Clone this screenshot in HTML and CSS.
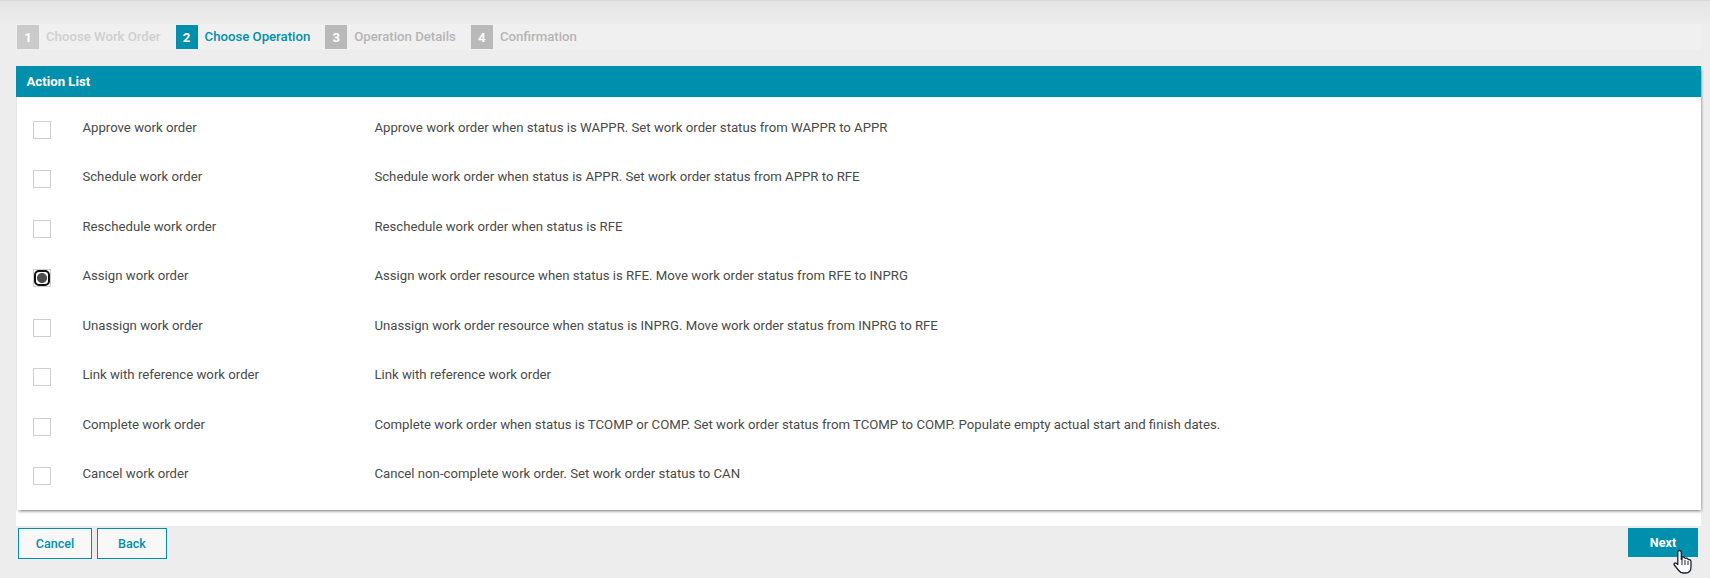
FILE: index.html
```html
<!DOCTYPE html>
<html lang="en">
<head>
<meta charset="utf-8">
<title>Action List</title>
<link rel="stylesheet" href="styles.css">
</head>
<body>
<div class="page">
  <main class="panel">
    <ol class="steps">
      <li class="step step-first"><span class="num">1</span><span class="label">Choose Work Order</span></li>
      <li class="step step-active"><span class="num">2</span><span class="label">Choose Operation</span></li>
      <li class="step"><span class="num">3</span><span class="label">Operation Details</span></li>
      <li class="step"><span class="num">4</span><span class="label">Confirmation</span></li>
    </ol>
    <section class="card">
      <h2 class="card-title">Action List</h2>
      <div class="rows">
        <div class="row"><span class="check"></span><span class="name">Approve work order</span><span class="desc">Approve work order when status is WAPPR. Set work order status from WAPPR to APPR</span></div>
        <div class="row"><span class="check"></span><span class="name">Schedule work order</span><span class="desc">Schedule work order when status is APPR. Set work order status from APPR to RFE</span></div>
        <div class="row"><span class="check"></span><span class="name">Reschedule work order</span><span class="desc">Reschedule work order when status is RFE</span></div>
        <div class="row"><span class="check check-on"><i class="dot"></i></span><span class="name">Assign work order</span><span class="desc">Assign work order resource when status is RFE. Move work order status from RFE to INPRG</span></div>
        <div class="row"><span class="check"></span><span class="name">Unassign work order</span><span class="desc">Unassign work order resource when status is INPRG. Move work order status from INPRG to RFE</span></div>
        <div class="row"><span class="check"></span><span class="name">Link with reference work order</span><span class="desc">Link with reference work order</span></div>
        <div class="row"><span class="check"></span><span class="name">Complete work order</span><span class="desc">Complete work order when status is TCOMP or COMP. Set work order status from TCOMP to COMP. Populate empty actual start and finish dates.</span></div>
        <div class="row"><span class="check"></span><span class="name">Cancel work order</span><span class="desc">Cancel non-complete work order. Set work order status to CAN</span></div>
      </div>
    </section>
    <div class="under"></div>
  </main>
  <footer class="actions">
    <button class="btn btn-cancel">Cancel</button>
    <button class="btn btn-back">Back</button>
    <button class="btn btn-next">Next</button>
  </footer>
</div>
<svg class="cursor" width="20" height="26" viewBox="0 0 20 26">
  <path d="M6.5 1.5c1.2 0 1.8.8 1.8 2v7l.7-.2V8.2c1.6-.7 2.6 0 2.8 1l.6.1c1.6-.6 2.6.2 2.8 1.2l.5.1c1.5-.3 2.3.6 2.3 2v5.2c0 3.6-2 6.2-5.6 6.2h-2.2c-2.4 0-3.6-1.2-4.9-3L1.3 16c-.8-1.3.5-2.7 2-1.8l1.5 1.3V3.5c0-1.2.6-2 1.7-2z" fill="#fff" stroke="#1c2233" stroke-width="1.3" stroke-linejoin="round"/>
  <path d="M9 11v5M12 11v5M15 12v4" stroke="#1c2233" stroke-width="1" fill="none"/>
</svg>
</body>
</html>
```
FILE: styles.css
```css
* { box-sizing: border-box; }
html, body { margin: 0; height: 100%; }
body {
  position: relative;
  overflow: hidden;
  background: #ededed;
  font-family: Roboto, "Liberation Sans", sans-serif;
  font-size: 13.2px;
  color: #4a4a4a;
}
.page {
  height: 578px;
  padding: 24px 9px 0 16px;
  border-top: 1px solid #d8d8d8;
  background: linear-gradient(#e4e4e4 0, #ededed 24px);
  display: flex;
  flex-direction: column;
}
.panel { margin-top: -1px; }
.steps {
  list-style: none;
  margin: 0;
  padding: 0 0 0 1px;
  height: 26px;
  background: #f0f0f0;
  display: flex;
  gap: 15px;
}
.step {
  display: flex;
  align-items: stretch;
  font-weight: 500;
  color: #b5b5b5;
  height: 24px;
  margin-top: 1px;
}
.num {
  width: 22px;
  background: #b9b9b9;
  color: #fff;
  font-weight: 700;
  display: flex;
  align-items: center;
  justify-content: center;
  margin-right: 7px;
}
.label { line-height: 24px; }
.step-first .num { background: #cacaca; }
.step-first .label { color: #cfcfcf; }
.step-active .num { background: #008fac; }
.step-active .label { color: #008fac; }
.card {
  margin-top: 16px;
  background: #fff;
  box-shadow: 1px 2px 3px -1px rgba(0,0,0,.55);
  position: relative;
  margin-left: 1px;
}
.card-title {
  margin: 0 0 0 -1px;
  height: 31px;
  padding: 0 10.5px;
  background: #008fac;
  color: #fff;
  font-size: 13.2px;
  font-weight: 700;
  line-height: 31px;
}
.rows { padding: 6.3px 0 10.7px; }
.row {
  height: 49.5px;
  display: flex;
  align-items: center;
}
.name, .desc { margin-bottom: 2px; }
.check {
  width: 18px;
  height: 18px;
  margin-left: 16px;
  margin-top: 3.6px;
  flex: none;
  border: 1px solid #cfcfcf;
  background: #fff;
  padding: 1px;
}
.check-on { padding: 0; }
.check-on .dot {
  display: block;
  width: 16px;
  height: 16px;
  border: 2px solid #111;
  border-radius: 5px;
  background: radial-gradient(circle, #4d4d4d 0 4.6px, #fff 5.4px);
}
.name { width: 292px; margin-left: 31.4px; flex: none; }
.under { height: 16px; background: #fff; }
.actions {
  display: flex;
  gap: 5px;
  padding: 2px 3px 0 2px;
  align-items: flex-start;
}
.btn {
  font-family: inherit;
  font-size: 12.6px;
  font-weight: 500;
  height: 31px;
  border: 1px solid #008fac;
  background: #f8f8f8;
  color: #008fac;
  padding: 0;
}
.btn-cancel { width: 74px; }
.btn-back { width: 70px; }
.btn-next {
  margin-left: auto;
  width: 70px;
  height: 29px;
  background: #008fac;
  color: #fff;
  font-weight: 700;
}
.cursor {
  position: absolute;
  left: 1673px;
  top: 549px;
}
```
